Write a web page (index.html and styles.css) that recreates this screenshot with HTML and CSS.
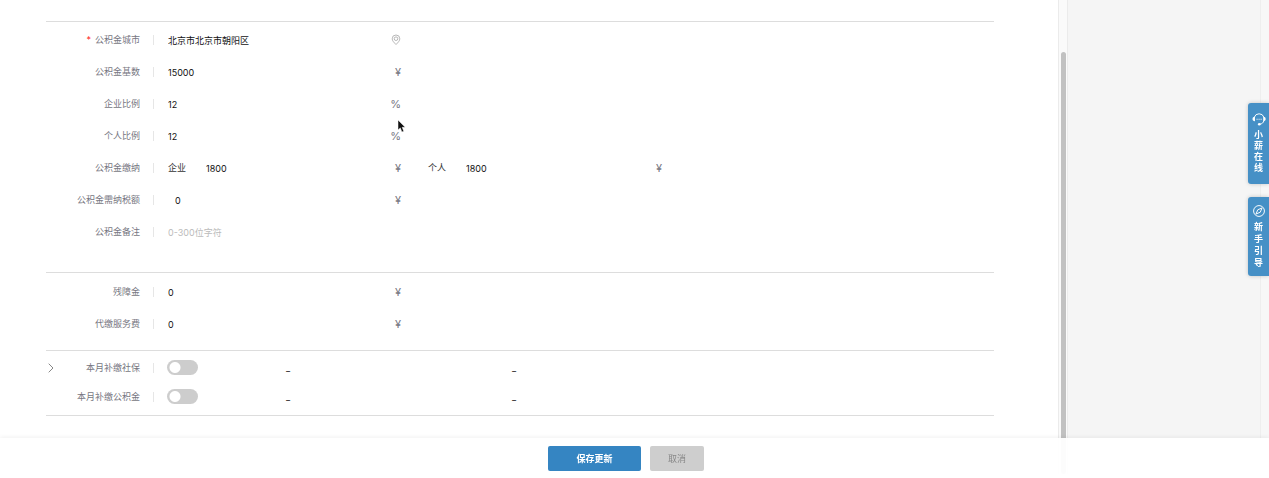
FILE: index.html
```html
<!DOCTYPE HTML>
<html lang="zh-CN">
<head>
<meta charset="utf-8">
<title>公积金</title>
<link rel="stylesheet" href="styles.css">
</head>

<body>
<form method="post" action="#" name="fund">
<div class="page">
	<div class="panel">
		<section class="group group-fund">
			<div class="row">
				<label for="city"><i class="must">*</i>公积金城市</label>
				<div class="field">
					<input type="text" id="city" value="北京市北京市朝阳区">
					<svg class="pin" viewBox="0 0 10 12"><path d="M5 10.500C3 8.500 1.200 6.800 1.200 4.800a3.800 3.800 0 0 1 7.600 0C8.800 6.800 7 8.500 5 10.500z"/><circle cx="5" cy="4.700" r="1.800"/></svg>
				</div>
			</div>
			<div class="row">
				<label for="base">公积金基数</label>
				<div class="field"><input type="text" id="base" value="15000"><span class="unit">¥</span></div>
			</div>
			<div class="row">
				<label for="companyRate">企业比例</label>
				<div class="field"><input type="text" id="companyRate" value="12"><span class="unit">%</span></div>
			</div>
			<div class="row">
				<label for="personRate">个人比例</label>
				<div class="field"><input type="text" id="personRate" value="12"><span class="unit">%</span></div>
			</div>
			<div class="row">
				<span class="label">公积金缴纳</span>
				<div class="field"><label class="sub" for="companyPay">企业</label><input type="text" id="companyPay" value="1800"><span class="unit">¥</span></div>
				<div class="field second"><label class="sub" for="personPay">个人</label><input type="text" id="personPay" value="1800"><span class="unit">¥</span></div>
			</div>
			<div class="row">
				<label for="tax">公积金需纳税额</label>
				<div class="field indent"><input type="text" id="tax" value="0"><span class="unit">¥</span></div>
			</div>
			<div class="row">
				<label for="remark">公积金备注</label>
				<div class="field"><input type="text" id="remark" placeholder="0-300位字符"></div>
			</div>
		</section>

		<section class="group group-fee">
			<div class="row">
				<label for="disabled">残障金</label>
				<div class="field"><input type="text" id="disabled" value="0"><span class="unit">¥</span></div>
			</div>
			<div class="row">
				<label for="service">代缴服务费</label>
				<div class="field"><input type="text" id="service" value="0"><span class="unit">¥</span></div>
			</div>
		</section>

		<section class="group group-extra">
			<div class="row">
				<button type="button" class="expand" aria-label="展开"><svg viewBox="0 0 6 10"><path d="M.7.700 5 5 .7 9.300"/></svg></button>
				<label for="extraSocial">本月补缴社保</label>
				<div class="switch-cell"><input type="checkbox" class="switch" id="extraSocial"></div>
				<span class="dash">_</span>
				<span class="dash">_</span>
			</div>
			<div class="row">
				<label for="extraFund">本月补缴公积金</label>
				<div class="switch-cell"><input type="checkbox" class="switch" id="extraFund"></div>
				<span class="dash">_</span>
				<span class="dash">_</span>
			</div>
		</section>
		<svg class="cursor" viewBox="0 0 9 14"><path d="M1 1v10l2.300-2.100L4.900 13l1.900-.8L5.200 8.300h3z"/></svg>
	</div>
	<div class="track"><div class="thumb"></div></div>
	<div class="blank"></div>
	<div class="edge"></div>
</div>

<footer class="footer">
	<button type="submit" class="save">保存更新</button>
	<button type="button" class="cancel">取消</button>
</footer>
</form>

<aside class="helpers">
	<a href="#" class="helper service">
		<svg viewBox="0 0 16 16"><path d="M2.600 6a5.800 5.800 0 0 1 11 0M13.500 10.200c-.5 2-2 3.400-4.600 3.700"/><path class="solid" d="M3.400 5.500v5C1.500 10.500.6 9.500.6 8s.9-2.500 2.800-2.500zM12.800 5.500v5c1.900 0 2.800-1 2.800-2.500s-.9-2.500-2.800-2.500z"/><circle class="solid" cx="8.300" cy="14" r="1.500"/><path d="M5.200 8.300h1.200M7.500 8.300h1.200M9.800 8.300h1.200"/></svg>
		<span>小薪在线</span>
	</a>
	<a href="#" class="helper guide">
		<svg viewBox="0 0 16 16"><circle cx="8" cy="8" r="6.200"/><path d="M11.500 4.500 9.400 9.400 4.500 11.500 6.600 6.600z"/></svg>
		<span>新手引导</span>
	</a>
</aside>
</body>
</html>
```

FILE: styles.css
```css
*{
	box-sizing:border-box;}

body{
	margin:0;
	color:#111;
	background:#fff;
	font:9px/16px Inter, "Noto Sans CJK SC", sans-serif;
}

input, button{
	font:inherit;
	color:inherit;
	margin:0;
	padding:0;
	border:0;
	background:none;
}

.page{
	display:flex;
	height:calc(100vh - 4px);
	overflow:hidden;
}
.panel{
	position:relative;
	flex:1;
	padding:21px 64px 0 46px;
}
.track{
	width:10px;
	padding:52px 2px 0;
	background:#fafafa;
	border-left:1px solid #ebebeb;
	border-right:1px solid #ebebeb;
}
.thumb{
	width:5px;
	height:100%;
	border-radius:3px;
	background:#c1c1c1;
}
.blank{
	width:192px;
	background:#f5f5f5;
}
.edge{
	width:9px;
	background:#f7f7f7;
	border-left:1px solid #eee;
}

/* 表单分组 */
.group{
	border-top:1px solid #ddd;
}
.group-fund{
	padding:2px 0 24px;
}
.group-fee{
	padding:3px 0 10px;
}
.group-extra{
	padding:2px 0 4px;
	border-bottom:1px solid #ddd;
}
.row{
	position:relative;
	display:flex;
	align-items:center;
	height:32px;
}
.group-extra .row{
	height:29px;
}
.row > label, .label{
	width:108px;
	height:16px;
	padding-right:14px;
	text-align:right;
	color:#777782;
	background:linear-gradient(#e6e6e6, #e6e6e6) right center / 1px 10px no-repeat;
}
.must{
	margin-right:4px;
	font-style:normal;
	color:#f22;
}
.field{
	display:flex;
	align-items:center;
	width:247px;
	padding-left:14px;
}
.field input{
	flex:1;
	min-width:0;
	height:16px;
	padding-top:2px;
	outline:none;
}
.field input::placeholder{
	color:#bbb;
	opacity:1;
}
.indent{
	padding-left:21px;
}
.sub{
	width:38px;
	color:#333;
}
.second{
	margin-left:27px;
	width:234px;
	padding-left:0;
}
.unit{
	font-size:11px;
	color:#777782;
}
.pin{
	width:10px;
	height:12px;
	fill:none;
	stroke:#999;
	stroke-width:.7;
}

.expand{
	position:absolute;
	left:2px;
	width:8px;
	height:16px;
}
.expand svg{
	display:block;
	width:6px;
	height:10px;
	fill:none;
	stroke:#888;
}
.switch-cell{
	display:flex;
	width:132px;
	padding-left:13px;
}
.switch{
	appearance:none;
	width:31px;
	height:15px;
	border-radius:8px;
	background:radial-gradient(circle at 8px 50%, #fff 5px, transparent 6px) #cdcdcd;
}
.dash{
	width:226px;
}

.cursor{
	position:absolute;
	left:397px;
	top:119px;
	width:9px;
	height:14px;
	fill:#111;
	stroke:#fff;
	stroke-width:.5;
}

/* 底部按钮 */
.footer{
	position:fixed;
	left:0;
	right:0;
	bottom:0;
	display:flex;
	justify-content:center;
	gap:9px;
	height:40px;
	padding:8px 17px 7px 0;
	background:rgba(255,255,255,.95);
	box-shadow:0 -1px 4px rgba(0,0,0,.06);
}
.footer button{
	width:54px;
	border-radius:2px;
	color:#888;
	background:#cecece;
}
.footer .save{
	width:93px;
	font-weight:bold;
	color:#fff;
	background:#3585c2;
}

/* 右侧浮动入口 */
.helpers{
	position:fixed;
	top:103px;
	right:0;
	display:flex;
	flex-direction:column;
	gap:13px;
}
.helper{
	display:flex;
	flex-direction:column;
	align-items:center;
	width:21px;
	height:81px;
	padding-top:9px;
	border-radius:3px 0 0 3px;
	color:#fff;
	background:#4690c6;
	box-shadow:0 0 4px rgba(0,0,0,.2);
	font-weight:bold;
	line-height:11px;
	text-align:center;
	text-decoration:none;
}
.helper svg{
	width:14px;
	height:14px;
	fill:none;
	stroke:#fff;
	stroke-width:1.1;
}
.helper .solid{
	fill:#fff;
	stroke:none;
}
.helper span{
	width:9px;
	margin-top:3px;
}
.guide{
	height:79px;
	padding-top:7px;
	line-height:12px;
}
```
